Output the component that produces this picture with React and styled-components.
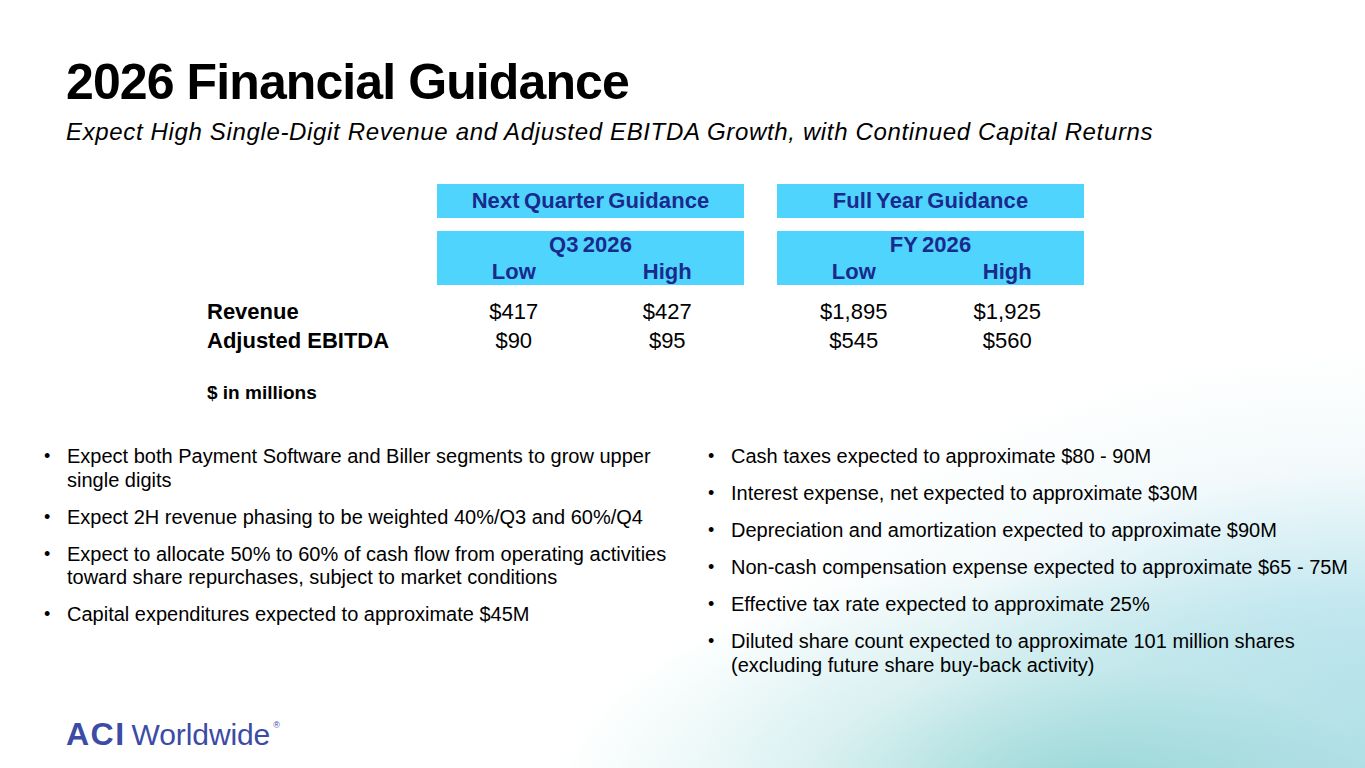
import React from 'react';
import styled, { createGlobalStyle } from 'styled-components';

const GlobalStyle = createGlobalStyle`
  html, body {
    margin: 0;
    padding: 0;
    background: #fff;
  }
  body {
    font-family: "Liberation Sans", Arial, sans-serif;
    color: #000;
  }
`;

const Slide = styled.div`
  width: 1365px;
  height: 768px;
  box-sizing: border-box;
  overflow: hidden;
  display: flex;
  flex-direction: column;
  padding: 54px 0 17px 0;
  background:
    radial-gradient(ellipse 540px 240px at 80% 104%, rgba(146, 212, 210, 0.9) 0%, rgba(190, 230, 230, 0.5) 55%, rgba(255, 255, 255, 0) 100%),
    radial-gradient(ellipse 660px 420px at 100% 100%, #a4d9e7 0%, #c4e8f0 40%, rgba(235, 246, 249, 0.6) 72%, rgba(255, 255, 255, 0) 100%),
    #fff;
`;

const Title = styled.h1`
  margin: 0 0 0 66px;
  font-size: 50px;
  line-height: 56px;
  font-weight: 700;
  letter-spacing: -0.9px;
`;

const Subtitle = styled.p`
  margin: 7px 0 0 66px;
  font-size: 24px;
  line-height: 30px;
  font-style: italic;
  letter-spacing: 0.65px;
`;

const Table = styled.div`
  margin: 37px 0 0 207px;
  display: grid;
  grid-template-columns: 230px 153.5px 153.5px 33px 153.5px 153.5px;
  align-items: center;
`;

const Band = styled.div`
  grid-column: ${(p) => p.$col} / span 2;
  background: #4fd4fe;
  color: #1a2a8c;
  font-weight: 700;
  font-size: 22px;
  height: ${(p) => p.$height}px;
  margin-top: ${(p) => p.$gap || 0}px;
  display: grid;
  grid-template-columns: 1fr 1fr;
  align-content: center;
  text-align: center;
`;

const BandTitle = styled.div`
  grid-column: 1 / span 2;
  line-height: ${(p) => p.$lh}px;
  letter-spacing: 0.1px;
  word-spacing: -2px;
`;

const BandCell = styled.div`
  line-height: 27px;
`;

const RowLabel = styled.div`
  grid-column: 1;
  font-weight: 700;
  font-size: 22px;
  line-height: 29px;
  margin-top: ${(p) => p.$gap || 0}px;
`;

const Value = styled.div`
  grid-column: ${(p) => p.$col};
  text-align: center;
  font-size: 22px;
  line-height: 29px;
  margin-top: ${(p) => p.$gap || 0}px;
`;

const Note = styled.div`
  margin: 26px 0 0 207px;
  font-weight: 700;
  font-size: 19px;
  line-height: 24px;
`;

const Columns = styled.div`
  margin-top: 40px;
  display: grid;
  grid-template-columns: 664px 1fr;
`;

const List = styled.ul`
  list-style: none;
  margin: 0;
  padding: 0 0 0 ${(p) => p.$indent}px;
  width: ${(p) => p.$width}px;
  display: flex;
  flex-direction: column;
  gap: 13.5px;
`;

const Item = styled.li`
  display: grid;
  grid-template-columns: 23px 1fr;
  font-size: 20px;
  line-height: 23.5px;
`;

const Dot = styled.span`
  font-size: 18px;
`;

const Footer = styled.div`
  margin: auto 0 0 66px;
  display: flex;
  align-items: baseline;
  color: #3b4ba6;
`;

const LogoMark = styled.span`
  font-weight: 700;
  font-size: 32px;
  line-height: 32px;
  letter-spacing: 1.5px;
  margin-right: 6px;
`;

const LogoWord = styled.span`
  font-size: 30px;
  line-height: 32px;
  letter-spacing: -0.1px;
`;

const Registered = styled.sup`
  font-size: 9px;
  margin-left: 3px;
  align-self: flex-start;
  line-height: 14px;
`;

const leftBullets = [
  'Expect both Payment Software and Biller segments to grow upper single digits',
  'Expect 2H revenue phasing to be weighted 40%/Q3 and 60%/Q4',
  'Expect to allocate 50% to 60% of cash flow from operating activities toward share repurchases, subject to market conditions',
  'Capital expenditures expected to approximate $45M',
];

const rightBullets = [
  'Cash taxes expected to approximate $80 - 90M',
  'Interest expense, net expected to approximate $30M',
  'Depreciation and amortization expected to approximate $90M',
  'Non-cash compensation expense expected to approximate $65 - 75M',
  'Effective tax rate expected to approximate 25%',
  'Diluted share count expected to approximate 101 million shares (excluding future share buy-back activity)',
];

const rows = [
  { label: 'Revenue', values: ['$417', '$427', '$1,895', '$1,925'] },
  { label: 'Adjusted EBITDA', values: ['$90', '$95', '$545', '$560'] },
];

const valueCols = [2, 3, 5, 6];

const Bullets = ({ items, indent, width }) => (
  <List $indent={indent} $width={width}>
    {items.map((t) => (
      <Item key={t}>
        <Dot>•</Dot>
        <span>{t}</span>
      </Item>
    ))}
  </List>
);

export default function App() {
  return (
    <Slide>
      <GlobalStyle />
      <Title>2026 Financial Guidance</Title>
      <Subtitle>
        Expect High Single-Digit Revenue and Adjusted EBITDA Growth, with Continued Capital Returns
      </Subtitle>

      <Table>
        <Band $col={2} $height={34}>
          <BandTitle $lh={34}>Next Quarter Guidance</BandTitle>
        </Band>
        <Band $col={5} $height={34}>
          <BandTitle $lh={34}>Full Year Guidance</BandTitle>
        </Band>

        <Band $col={2} $height={54} $gap={13}>
          <BandTitle $lh={26}>Q3 2026</BandTitle>
          <BandCell>Low</BandCell>
          <BandCell>High</BandCell>
        </Band>
        <Band $col={5} $height={54} $gap={13}>
          <BandTitle $lh={26}>FY 2026</BandTitle>
          <BandCell>Low</BandCell>
          <BandCell>High</BandCell>
        </Band>

        {rows.map((r, i) => (
          <React.Fragment key={r.label}>
            <RowLabel $gap={i === 0 ? 12 : 0}>{r.label}</RowLabel>
            {r.values.map((v, j) => (
              <Value key={j} $col={valueCols[j]} $gap={i === 0 ? 12 : 0}>
                {v}
              </Value>
            ))}
          </React.Fragment>
        ))}
      </Table>

      <Note>$ in millions</Note>

      <Columns>
        <Bullets items={leftBullets} indent={44} width={630} />
        <Bullets items={rightBullets} indent={44} width={660} />
      </Columns>

      <Footer>
        <LogoMark>ACI</LogoMark>
        <LogoWord>Worldwide</LogoWord>
        <Registered>®</Registered>
      </Footer>
    </Slide>
  );
}
